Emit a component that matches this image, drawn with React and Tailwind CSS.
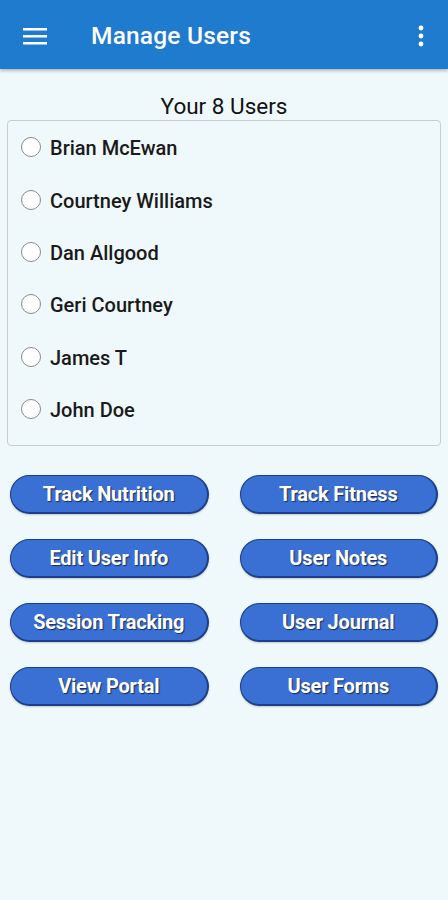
import React, { useState } from "react";

const users = ["Brian McEwan", "Courtney Williams", "Dan Allgood", "Geri Courtney", "James T", "John Doe"];

const actions = [
  "Track Nutrition",
  "Track Fitness",
  "Edit User Info",
  "User Notes",
  "Session Tracking",
  "User Journal",
  "View Portal",
  "User Forms",
];

function App() {
  const [selected, setSelected] = useState(null);

  return (
    <div className="min-h-[900px] bg-[#eff9fc] font-['Roboto',sans-serif]">
      {/* app bar */}
      <div className="h-[69px] bg-[#1f7bcd] flex items-center shadow-[0_2px_3px_rgba(0,0,0,0.25)]">
        <svg width="24" height="24" viewBox="0 0 24 24" className="ml-[23px] mt-[2px]" fill="white">
          <rect x="0" y="4" width="24" height="2.5" />
          <rect x="0" y="11" width="24" height="2.5" />
          <rect x="0" y="18" width="24" height="2.5" />
        </svg>
        <h1 className="ml-[44px] mt-[3px] text-white text-[24.5px] font-medium tracking-[0.2px]">Manage Users</h1>
        <svg width="6" height="22" viewBox="0 0 6 22" className="ml-auto mr-[24px] mt-[2px]" fill="white">
          <circle cx="3" cy="3" r="2.4" />
          <circle cx="3" cy="11" r="2.4" />
          <circle cx="3" cy="19" r="2.4" />
        </svg>
      </div>

      <h2 className="text-center text-[22.5px] text-[#111] mt-[22px] leading-[30px]">Your 8 Users</h2>

      <div className="mx-[7px] -mt-[1px] h-[326px] border border-[#c9cdd0] rounded-[4px] pt-[9px]">
        {users.map((u, i) => (
          <label key={u} className="flex items-center h-[52.4px] pl-[13px] cursor-pointer" onClick={() => setSelected(i)}>
            <span className="w-[20px] h-[20px] rounded-full border-[1.5px] border-[#8a8a8a] bg-white flex items-center justify-center -mt-[18px]">
              {selected === i && <span className="w-[10px] h-[10px] rounded-full bg-[#1f7bcd]" />}
            </span>
            <span className="ml-[9px] text-[20px] font-medium text-[#1a1a1a] -mt-[16px]">{u}</span>
          </label>
        ))}
      </div>

      <div className="grid grid-cols-2 gap-x-[31px] gap-y-[25px] px-[10px] mt-[29px]">
        {actions.map((a) => (
          <button
            key={a}
            className="h-[39px] rounded-full bg-[#3a6fd3] border border-[#1c3f8c] border-b-[2.5px] border-r-[2px] text-white text-[20px] font-bold tracking-[-0.2px] [text-shadow:1px_1px_1px_rgba(0,0,0,0.6)] shadow-[0_1px_2px_rgba(0,0,0,0.2)]"
          >
            {a}
          </button>
        ))}
      </div>
    </div>
  );
}

export default App;
